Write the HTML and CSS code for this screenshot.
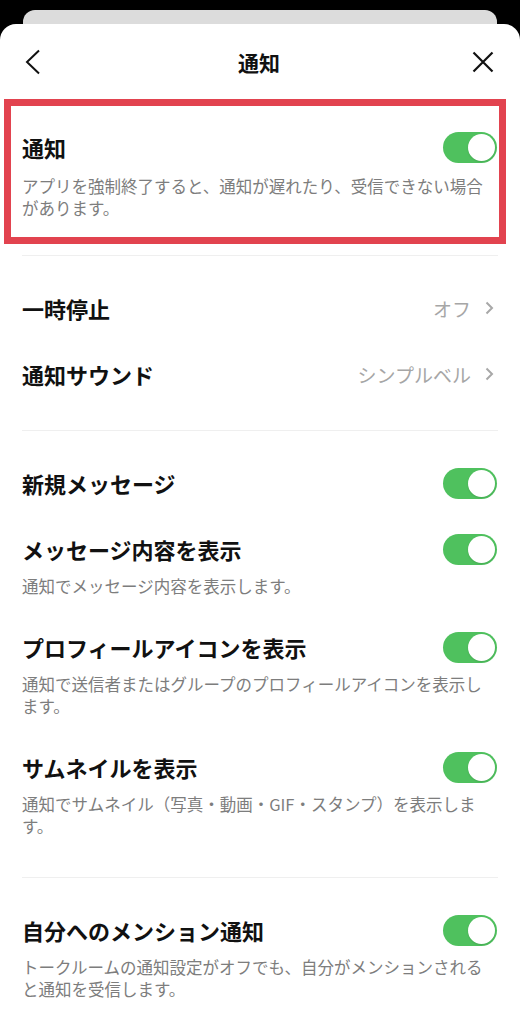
FILE: index.html
```html
<!DOCTYPE html>
<html lang="ja">
<head>
    <meta charset="UTF-8">
    <title>通知</title>
    <link rel="stylesheet" href="styles.css">
</head>
<body>
<div class="backcard"></div>
<div class="sheet">
    <div class="header">
        <svg class="back" width="16" height="26" viewBox="0 0 16 26"><polyline points="15,1.5 3,13 15,24.5" fill="none" stroke="#111" stroke-width="2"/></svg>
        <h1 class="title">通知</h1>
        <svg class="close" width="22" height="22" viewBox="0 0 22 22"><path d="M1.5 1.5L20.5 20.5M20.5 1.5L1.5 20.5" stroke="#111" stroke-width="2.2"/></svg>
    </div>

    <div class="highlight">
        <div class="item item-main">
            <div class="item-head"><span class="item-title">通知</span><span class="toggle"></span></div>
            <p class="item-desc">アプリを強制終了すると、通知が遅れたり、受信できない場合があります。</p>
        </div>
    </div>

    <div class="section">
        <div class="item">
            <div class="item-head">
                <span class="item-title">一時停止</span>
                <span class="item-value">オフ<svg class="chev" width="9" height="14" viewBox="0 0 9 14"><polyline points="1.5,1.5 7,7 1.5,12.5" fill="none" stroke="#a8a8a8" stroke-width="2"/></svg></span>
            </div>
        </div>
        <div class="item">
            <div class="item-head">
                <span class="item-title">通知サウンド</span>
                <span class="item-value">シンプルベル<svg class="chev" width="9" height="14" viewBox="0 0 9 14"><polyline points="1.5,1.5 7,7 1.5,12.5" fill="none" stroke="#a8a8a8" stroke-width="2"/></svg></span>
            </div>
        </div>
    </div>

    <div class="section">
        <div class="item">
            <div class="item-head"><span class="item-title">新規メッセージ</span><span class="toggle"></span></div>
        </div>
        <div class="item">
            <div class="item-head"><span class="item-title">メッセージ内容を表示</span><span class="toggle"></span></div>
            <p class="item-desc">通知でメッセージ内容を表示します。</p>
        </div>
        <div class="item">
            <div class="item-head"><span class="item-title">プロフィールアイコンを表示</span><span class="toggle"></span></div>
            <p class="item-desc">通知で送信者またはグループのプロフィールアイコンを表示します。</p>
        </div>
        <div class="item">
            <div class="item-head"><span class="item-title">サムネイルを表示</span><span class="toggle"></span></div>
            <p class="item-desc">通知でサムネイル（写真・動画・GIF・スタンプ）を表示します。</p>
        </div>
    </div>

    <div class="section">
        <div class="item">
            <div class="item-head"><span class="item-title">自分へのメンション通知</span><span class="toggle"></span></div>
            <p class="item-desc">トークルームの通知設定がオフでも、自分がメンションされると通知を受信します。</p>
        </div>
    </div>
</div>
</body>
</html>
```

FILE: styles.css
```css
* {
    padding: 0;
    margin: 0;
    box-sizing: border-box;
}

body {
    background: #000;
    font-family: "Noto Sans CJK JP", "Noto Sans", sans-serif;
    color: #111;
    overflow: hidden;
}

.backcard {
    height: 14px;
    margin: 10px 23px 0;
    background: #dcdcdc;
    border-radius: 12px 12px 0 0;
}

.sheet {
    background: #fff;
    border-radius: 16px 16px 0 0;
    min-height: 1000px;
    padding: 0 22px;
}

/* header */
.header {
    height: 75px;
    padding: 1px 4px 0 2px;
    display: grid;
    grid-template-columns: 1fr auto 1fr;
    align-items: center;
}

.back {
    display: block;
}

.close {
    display: block;
    justify-self: end;
}

.title {
    font-size: 21px;
    font-weight: bold;
    line-height: 30px;
}

/* red frame around first setting */
.highlight {
    margin: 0 -8px 0 -18px;
    border: 7px solid #e2434f;
    padding: 0 1px 0 11px;
}

/* rows */
.section {
    border-top: 1px solid #efefef;
    padding: 19px 0 23px;
}

.highlight + .section {
    margin-top: 11px;
}

.item {
    padding: 17px 0;
}

.item-main {
    padding: 25px 0 18px;
}

.item-head {
    height: 32px;
    display: flex;
    align-items: center;
    justify-content: space-between;
}

.item-title {
    font-size: 22px;
    font-weight: bold;
    line-height: 32px;
}

.item-value {
    display: flex;
    align-items: center;
    font-size: 19px;
    color: #a6a6a6;
    margin-right: 4px;
}

.chev {
    margin-left: 14px;
}

.item-desc {
    margin-top: 10px;
    font-size: 16.5px;
    line-height: 22px;
    color: #7d7d7d;
}

.item-main .item-desc {
    margin-top: 12px;
}

/* switch */
.toggle {
    position: relative;
    width: 54px;
    height: 31px;
    border-radius: 16px;
    background: #4fc15e;
    margin-right: 1px;
    flex-shrink: 0;
}

.toggle::after {
    content: "";
    position: absolute;
    right: 2px;
    top: 2px;
    width: 27px;
    height: 27px;
    border-radius: 50%;
    background: #fff;
    box-shadow: 0 1px 2px rgba(0, 0, 0, 0.12);
}
```
